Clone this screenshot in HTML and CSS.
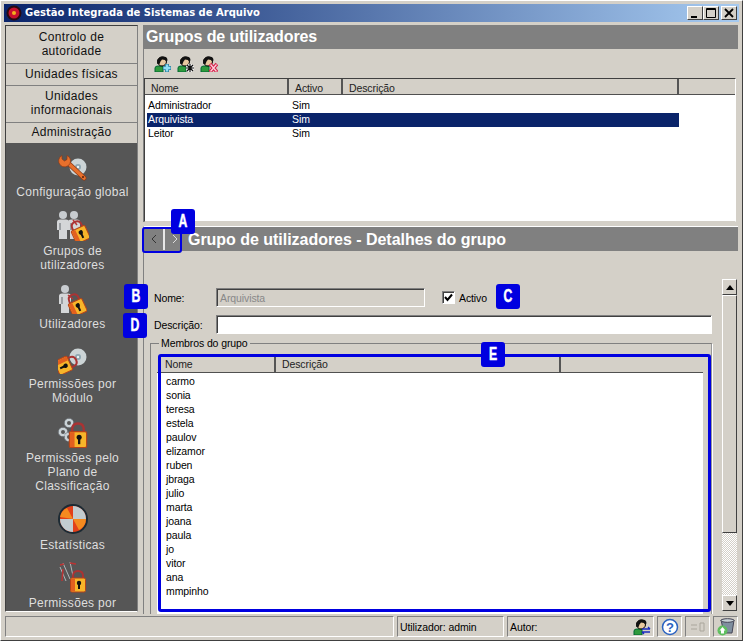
FILE: index.html
```html
<!DOCTYPE html>
<html lang="pt">
<head>
<meta charset="utf-8">
<title>Gestão Integrada de Sistemas de Arquivo</title>
<link rel="stylesheet" href="styles.css">
</head>
<body>
<svg class="defs" width="0" height="0">
  <defs>
    <g id="person">
      <path d="M1 16V12Q1 10 4 10H9V16z" fill="#2f9a3c" stroke="#063"/>
      <circle cx="8" cy="5.500" r="4.500" fill="#e8c8a0" stroke="#000"/>
      <path d="M3.500 8C1 0 13.500 -2 13.500 4L12.500 6.500 11 4 8 3.500 6.500 5.500 5.500 8z" fill="#111"/>
    </g>
    <g id="lock">
      <path d="M-5 -2V-5Q-5 -10 0 -10T5 -5V-2" fill="none" stroke="#a33" stroke-width="2"/>
      <rect x="-7.500" y="-3" width="15" height="14" rx="1.500" fill="#f7b52a" stroke="#b4431a"/>
      <path d="M-7 -2.500H-3V10.500H-7z" fill="#e2601f"/>
      <circle cx="1" cy="2" r="2.200" fill="#111"/>
      <path d="M0 2H2V8H0z" fill="#111"/>
    </g>
    <g id="figure">
      <circle cx="6" cy="4" r="4" fill="#c8ccd0"/>
      <path d="M0 11Q0 8.500 3 8.500H9Q12 8.500 12 11V19H10V28H2V19H0z" fill="#d4d6d8"/>
      <path d="M2 12V19H4V12z" fill="#9a9ea2"/>
    </g>
    <g id="disc">
      <circle r="8.500" fill="#ccd4d6"/>
      <circle r="3" fill="#8fa6b0"/>
      <circle r="1.200" fill="#eef2f3"/>
    </g>
    <g id="gear">
      <circle r="3.300" fill="none" stroke="#c9d2d6" stroke-width="2.600"/>
      <circle r="4.800" fill="none" stroke="#6a7078" stroke-width="1" stroke-dasharray="2 1.500"/>
    </g>
  </defs>
</svg>
<div class="window">
  <header class="titlebar">
    <svg class="app-logo" width="16" height="16" viewBox="0 0 16 16"><circle cx="8" cy="8" r="7.500" fill="#2a0a10"/><circle cx="8" cy="8" r="5.500" fill="#c8102e"/><circle cx="8" cy="8" r="2" fill="#f3b01d"/></svg>
    <span class="title-text">Gestão Integrada de Sistemas de Arquivo</span>
    <div class="win-controls">
      <button class="win-btn"><svg width="14" height="12" viewBox="0 0 14 12"><path d="M3 9H9V11H3z" fill="#000"/></svg></button>
      <button class="win-btn"><svg width="14" height="12" viewBox="0 0 14 12"><path d="M2.500 1.500H11.500V10.500H2.500zM2.500 2.500H11.500" fill="none" stroke="#000"/></svg></button>
      <button class="win-btn win-close"><svg width="14" height="12" viewBox="0 0 14 12"><path d="M3 2L11 10M11 2L3 10" stroke="#000" stroke-width="1.800"/></svg></button>
    </div>
  </header>

  <div class="workspace">
    <nav class="sidebar">
      <div class="side-tab side-tab-first">Controlo de<br>autoridade</div>
      <div class="side-tab">Unidades físicas</div>
      <div class="side-tab">Unidades<br>informacionais</div>
      <div class="side-tab side-tab-last">Administração</div>
      <div class="side-list">
        <a class="side-item">
          <span class="side-icon"><svg width="30" height="28" viewBox="0 0 30 28"><use href="#disc" x="20" y="13"/><path d="M9 8L26 24" stroke="#8a3a17" stroke-width="5" stroke-linecap="round"/><path d="M9 8L26 24" stroke="#e8702c" stroke-width="3.600" stroke-linecap="round"/><path d="M4 1.500A6 6 0 1 0 12 9.500 6 6 0 0 0 9 1.500V5.500L6.500 7 4 5z" fill="#e8702c" stroke="#8a3a17" stroke-width=".7"/><circle cx="25" cy="23" r="1" fill="#5a1f0a"/></svg></span>
          <span class="side-label">Configuração global</span>
        </a>
        <a class="side-item">
          <span class="side-icon"><svg width="32" height="30" viewBox="0 0 32 30"><use href="#figure" x="0" y="0"/><use href="#figure" x="11" y="0"/><path d="M16 9L20 14" stroke="#b33" stroke-width="1.500"/><use href="#lock" transform="translate(22 20) rotate(-25)"/></svg></span>
          <span class="side-label">Grupos de<br>utilizadores</span>
        </a>
        <a class="side-item">
          <span class="side-icon"><svg width="28" height="30" viewBox="0 0 28 30"><use href="#figure" x="0" y="1"/><path d="M9 11L14 15" stroke="#b33" stroke-width="1.500"/><use href="#lock" transform="translate(17 20) rotate(-25)"/></svg></span>
          <span class="side-label">Utilizadores</span>
        </a>
        <a class="side-item side-item-low">
          <span class="side-icon"><svg width="30" height="26" viewBox="0 0 30 26"><use href="#disc" x="20" y="9"/><use href="#lock" transform="translate(9 16) rotate(65)"/></svg></span>
          <span class="side-label">Permissões por<br>Módulo</span>
        </a>
        <a class="side-item side-item-low">
          <span class="side-icon"><svg width="32" height="31" viewBox="0 0 32 31"><use href="#gear" x="12" y="6"/><use href="#gear" x="6" y="15"/><use href="#gear" x="12" y="20"/><g transform="translate(21 18) scale(1.150)"><use href="#lock"/></g></svg></span>
          <span class="side-label">Permissões pelo<br>Plano de<br>Classificação</span>
        </a>
        <a class="side-item">
          <span class="side-icon"><svg width="32" height="32" viewBox="0 0 32 32"><circle cx="16" cy="16" r="15" fill="#1c2a33"/><circle cx="16" cy="16" r="13" fill="#e2401a"/><path d="M16 16L16 3A13 13 0 0 1 29 16zM16 16L16 29A13 13 0 0 1 3 16z" fill="#c2ccd0"/><path d="M16 16L29 16A13 13 0 0 1 22 27z" fill="#f58a1f"/><path d="M16 16L3 14A13 13 0 0 1 10 5z" fill="#f58a1f"/></svg></span>
          <span class="side-label">Estatísticas</span>
        </a>
        <a class="side-item side-item-high">
          <span class="side-icon"><svg width="30" height="32" viewBox="0 0 30 32"><path d="M5 2L12 18M12 1L15 15M2 6L8 20" stroke="#c8ccd0" stroke-width=".8"/><path d="M2 4L6 3M12 2L18 3M5 8L4 20" stroke="#b33" stroke-width="1.500"/><use href="#lock" transform="translate(20 20)"/></svg></span>
          <span class="side-label">Permissões por</span>
        </a>
      </div>
    </nav>

    <main class="content">
      <section class="groups">
        <h1 class="panel-title">Grupos de utilizadores</h1>
        <div class="toolbar">
          <svg class="tool-icon" width="18" height="16" viewBox="0 0 18 16"><use href="#person"/><path d="M9 12H17M13 8V16" stroke="#2a7f9f" stroke-width="4"/><path d="M9.500 12H16.500M13 8.500V15.500" stroke="#8fdcf4" stroke-width="2.400"/></svg>
          <svg class="tool-icon" width="18" height="16" viewBox="0 0 18 16"><use href="#person"/><circle cx="13" cy="12" r="4" fill="#fff"/><path d="M10 9L16 15M16 9L10 15M13 8V16M9 12H17" stroke="#111" stroke-width="1.200"/></svg>
          <svg class="tool-icon" width="18" height="16" viewBox="0 0 18 16"><use href="#person"/><path d="M10 8L17 16M17 8L10 16" stroke="#d8204a" stroke-width="3.600"/><path d="M10.500 8.500L16.500 15.500M16.500 8.500L10.500 15.500" stroke="#fbd0da" stroke-width="1.300"/></svg>
        </div>
        <div class="grid grid-groups">
          <div class="grid-head">
            <span class="col col-g1">Nome</span>
            <span class="col col-g2">Activo</span>
            <span class="col col-g3">Descrição</span>
            <span class="col col-fill"></span>
          </div>
          <div class="grid-body">
            <div class="grow"><span class="cell-g1">Administrador</span><span class="cell-g2">Sim</span></div>
            <div class="grow is-selected"><span class="cell-g1">Arquivista</span><span class="cell-g2">Sim</span></div>
            <div class="grow"><span class="cell-g1">Leitor</span><span class="cell-g2">Sim</span></div>
          </div>
        </div>
      </section>

      <section class="details">
        <div class="details-head">
          <div class="nav-buttons">
            <button class="nav-btn"><svg width="6" height="10" viewBox="0 0 6 10"><path d="M5 1L1 5 5 9" fill="none" stroke="#333"/></svg></button>
            <button class="nav-btn"><svg width="6" height="10" viewBox="0 0 6 10"><path d="M1 1L5 5 1 9" fill="none" stroke="#ddd"/></svg></button>
          </div>
          <h2 class="panel-title panel-title-details">Grupo de utilizadores - Detalhes do grupo</h2>
        </div>
        <div class="details-body">
          <form class="form">
            <div class="form-row">
              <label class="form-label">Nome:</label>
              <div class="field field-name">Arquivista</div>
              <span class="checkbox"><svg width="9" height="9" viewBox="0 0 9 9"><path d="M1 4L3.500 7 8 1.500" fill="none" stroke="#000" stroke-width="2"/></svg></span>
              <span class="check-label">Activo</span>
            </div>
            <div class="form-row form-row-desc">
              <label class="form-label">Descrição:</label>
              <div class="field field-desc"></div>
            </div>
            <fieldset class="members">
              <legend class="members-legend">Membros do grupo</legend>
              <div class="grid grid-members">
                <div class="grid-head">
                  <span class="col col-m1">Nome</span>
                  <span class="col col-m2">Descrição</span>
                  <span class="col col-fill"></span>
                </div>
                <ul class="member-list">
                  <li>carmo</li><li>sonia</li><li>teresa</li><li>estela</li><li>paulov</li><li>elizamor</li><li>ruben</li><li>jbraga</li><li>julio</li><li>marta</li><li>joana</li><li>paula</li><li>jo</li><li>vitor</li><li>ana</li><li>mmpinho</li>
                </ul>
              </div>
            </fieldset>
          </form>
          <div class="scrollbar">
            <button class="sb-btn"><svg width="8" height="5" viewBox="0 0 8 5"><path d="M4 0L8 5H0z"/></svg></button>
            <div class="sb-thumb"></div>
            <div class="sb-track"></div>
            <button class="sb-btn"><svg width="8" height="5" viewBox="0 0 8 5"><path d="M0 0H8L4 5z"/></svg></button>
          </div>
        </div>
      </section>
    </main>
  </div>

  <footer class="statusbar">
    <div class="st-panel st-grow"></div>
    <div class="st-panel st-user">Utilizador: admin</div>
    <div class="st-panel st-author"><span>Autor:</span>
      <svg width="18" height="16" viewBox="0 0 18 16"><use href="#person"/><path d="M9 10H17M15 8L17 10M9 13H17M11 15L9 13" stroke="#1a2ac0" stroke-width="1.300" fill="none"/></svg>
    </div>
    <div class="st-panel st-btn"><svg width="18" height="18" viewBox="0 0 18 18"><circle cx="9" cy="9" r="7.500" fill="#fff" stroke="#2a62c0" stroke-width="1.500"/><text class="help-mark" x="9" y="13.500" text-anchor="middle">?</text></svg></div>
    <div class="st-panel st-btn"><svg width="16" height="10" viewBox="0 0 16 10"><path d="M1 3H7M1 7H7M10 1H14V9H10z" fill="none" stroke="#aaa69c"/></svg></div>
    <div class="st-panel st-btn"><svg width="20" height="18" viewBox="0 0 20 18"><path d="M5 2H18L16 15H8z" fill="#7f8f9f" stroke="#445"/><ellipse cx="11.500" cy="2.500" rx="6.500" ry="1.800" fill="#c9d2d6" stroke="#445"/><circle cx="6.500" cy="12.500" r="5" fill="#5fbf5f"/><path d="M6.500 9L9.500 12.500H8V15.500H5V12.500H3.500z" fill="#fff"/></svg></div>
  </footer>

  <span class="nav-outline"></span>
  <span class="members-outline"></span>
  <span class="badge badge-a"><b class="badge-letter">A</b></span>
  <span class="badge badge-b"><b class="badge-letter">B</b></span>
  <span class="badge badge-c"><b class="badge-letter">C</b></span>
  <span class="badge badge-d"><b class="badge-letter">D</b></span>
  <span class="badge badge-e"><b class="badge-letter">E</b></span>
</div>
</body>
</html>
```

FILE: styles.css
```css
* { box-sizing: border-box; }
html, body { margin: 0; padding: 0; }
body { width: 743px; height: 641px; overflow: hidden; background: #d4d0c8; font: 10.5px/14px "Liberation Sans", Arial, sans-serif; letter-spacing: -.1px; color: #000; }
.defs { position: absolute; }
button { padding: 0; margin: 0; font: inherit; }

.window {
  position: relative;
  width: 743px; height: 641px;
  padding: 4px 4px 3px 4px;
  display: flex; flex-direction: column;
  background: #d4d0c8;
  border: 1px solid #fff;
  border-right-color: #404040; border-bottom-color: #404040;
}

.titlebar {
  height: 18px; flex: none;
  display: flex; align-items: center;
  padding: 0 2px 0 2px; margin: -1px -1px 0 -1px;
  background: linear-gradient(to right, #0a246a, #a6caf0);
  color: #fff;
}
.app-logo { flex: none; margin-right: 3px; }
.title-text { font: bold 10px/18px "DejaVu Sans", sans-serif; letter-spacing: 0; white-space: nowrap; }
.win-controls { margin-left: auto; display: flex; }
.win-btn {
  width: 16px; height: 14px; display: flex; align-items: center; justify-content: center;
  background: #d4d0c8;
  border: 1px solid; border-color: #fff #404040 #404040 #fff;
}
.win-close { margin-left: 2px; }

.workspace { flex: 1; min-height: 0; display: flex; margin-top: 3px; }

.sidebar {
  width: 133px; flex: none; height: 587px; overflow: hidden;
  display: flex; flex-direction: column; gap: 1px;
  border: 1px solid; border-color: #404040 #808080 #fff #404040;
  background: #808080;
  text-align: center;
  letter-spacing: .3px;
  font-size: 12px;
}
.side-tab { background: #d4d0c8; padding: 3px 0 4px; line-height: 14px; color: #111; }
.side-tab-first { padding: 4px 0 5px; }
.side-tab:nth-child(3) { padding-bottom: 5px; }
.side-tab-last { padding: 2px 0 4px; }
.side-list { flex: 1; min-height: 0; overflow: hidden; background: #565656; display: flex; flex-direction: column; gap: 4px; margin-top: -1px; padding: 1px 0 0 2px; color: #dedede; }
.side-item { display: flex; flex-direction: column; align-items: center; flex: none; }
.side-item-low { margin-top: 1px; }
.side-item-high { margin-top: -1px; }
.side-icon { height: 41px; display: flex; align-items: flex-end; justify-content: center; padding-bottom: 3px; }
.side-label { display: block; line-height: 14px; }

.content { flex: 1; min-width: 0; display: flex; flex-direction: column; margin-left: 5px; height: 589px; }

.groups { height: 197px; flex: none; display: flex; flex-direction: column; border-left: 1px solid #808080; }
.panel-title { margin: 0; height: 24px; background: #808080; color: #fff; font: bold 16px/24px "Liberation Sans", sans-serif; letter-spacing: -.1px; padding-left: 2px; }
.toolbar { height: 29px; flex: none; display: flex; align-items: center; gap: 5px; padding: 0 0 0 10px; }

.grid-groups { flex: 1; margin-right: 2px; background: #fff; border: 1px solid; border-color: #404040 #fff #d4d0c8 #404040; display: flex; flex-direction: column; }
.grid-head { display: flex; height: 16px; flex: none; background: #d4d0c8; border-bottom: 1px solid #505050; }
.col { display: block; border-right: 2px solid #555; padding-left: 6px; line-height: 18px; color: #222; white-space: nowrap; }
.grid-members .col { line-height: 15px; }
.col-g1 { width: 144px; }
.col-g2 { width: 54px; }
.col-g3 { width: 336px; }
.col-fill { flex: 1; border-right: 0; }
.grid-body { flex: 1; background: #fff; padding-top: 4px; }
.grow { display: flex; height: 14px; width: 532px; margin-left: 2px; line-height: 13px; }
.is-selected { background: #0a246a; color: #fff; }
.cell-g1 { width: 145px; padding-left: 1px; }
.cell-g2 { width: 54px; }

.details { flex: 1; min-height: 0; margin-top: 4px; border-top: 1px solid #fff; display: flex; flex-direction: column; border-left: 1px solid #808080; }
.details-head { height: 24px; flex: none; background: #808080; display: flex; align-items: center; }
.nav-buttons { display: flex; height: 22px; flex: none; }
.nav-btn { width: 20px; height: 22px; background: #808080; display: flex; align-items: center; justify-content: center; border: 0; }
.nav-btn:first-child { border-right: 1px solid #e8e8e8; }
.nav-btn:last-child { border-left: 1px solid #e8e8e8; }
.panel-title-details { background: none; padding-left: 4px; letter-spacing: -.03px; height: 24px; line-height: 26px; }

.details-body { flex: 1; min-height: 0; position: relative; display: flex; padding: 28px 1px 0 10px; overflow: hidden; }
.form { flex: 1; min-width: 0; margin-right: 10px; padding-top: 9px; }
.form-row { display: flex; align-items: center; height: 19px; }
.form-row-desc { margin-top: 8px; }
.form-label { width: 62px; flex: none; }
.field { height: 19px; border: 1px solid; border-color: #808080 #fff #fff #808080; box-shadow: inset 1px 1px 0 #404040; background: #fff; padding: 2px 0 0 3px; }
.field-name { width: 209px; background: #d4d0c8; color: #888; }
.checkbox { width: 13px; height: 13px; margin-left: 17px; background: #fff; border: 1px solid; border-color: #808080 #fff #fff #808080; box-shadow: inset 1px 1px 0 #404040; display: flex; align-items: center; justify-content: center; }
.check-label { margin-left: 4px; }
.field-desc { width: 496px; height: 19px; }

.members { margin: 3px 0 0 -4px; padding: 7px 2px 0 6px; width: 562px; height: 300px; border: 1px solid #808080; border-right-color: #999; box-shadow: 1px 1px 0 #fff; }
.members-legend { padding: 0 2px; margin-left: 2px; line-height: 12px; }
.grid-members { background: #fff; height: 292px; width: 546px; margin-top: 1px; }
.col-m1 { width: 119px; padding-left: 8px; }
.col-m2 { width: 285px; }
.member-list { list-style: none; margin: 0; padding: 1px 0 0 9px; }
.member-list li { height: 14px; line-height: 14px; }

.scrollbar { width: 15px; flex: none; height: 332px; display: flex; flex-direction: column; }
.sb-btn { width: 15px; height: 16px; flex: none; background: #d4d0c8; border: 1px solid; border-color: #fff #404040 #404040 #fff; display: flex; align-items: center; justify-content: center; }
.sb-thumb { height: 238px; flex: none; background: #d4d0c8; border: 1px solid; border-color: #fff #404040 #404040 #fff; }
.sb-track { flex: 1; background: repeating-conic-gradient(#fff 0 25%, #d4d0c8 0 50%) 0 0 / 2px 2px; }

.statusbar { height: 21px; flex: none; display: flex; gap: 3px; margin-top: auto; }
.st-panel { height: 21px; border: 1px solid; border-color: #808080 #fff #fff #808080; display: flex; align-items: center; white-space: nowrap; }
.st-grow { width: 389px; }
.st-user { width: 107px; padding-left: 2px; }
.st-author { width: 147px; padding: 0 2px 0 2px; justify-content: space-between; }
.st-btn { width: 25px; justify-content: center; }
.help-mark { font: bold 13px "Liberation Sans", sans-serif; fill: #2a62c0; }

.nav-outline { position: absolute; left: 141px; top: 226px; width: 40px; height: 26px; border: 2px solid #0000e0; border-radius: 3px; }
.members-outline { position: absolute; left: 157px; top: 353px; width: 553px; height: 258px; border: 3px solid #0000e0; border-radius: 3px; }
.badge { position: absolute; width: 24px; height: 25px; background: #0000e0; border-radius: 3px; color: #fff; text-align: center; }
.badge-letter { display: block; font: bold 18px/25px "Liberation Sans", sans-serif; transform: scaleX(.68); -webkit-text-stroke: .5px #fff; }
.badge-a { left: 170px; top: 208px; }
.badge-b { left: 123px; top: 283px; }
.badge-c { left: 495px; top: 283px; }
.badge-d { left: 122px; top: 312px; }
.badge-e { left: 480px; top: 341px; }
```
